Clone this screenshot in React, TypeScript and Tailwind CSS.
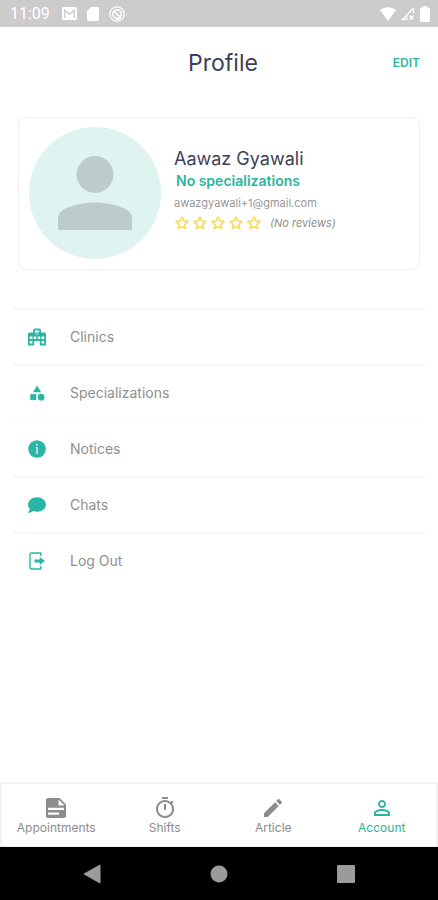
import React from 'react';
import {
  MdCategory,
  MdEdit,
  MdOutlineTimer,
  MdPersonOutline,
} from 'react-icons/md';
import { FaComment } from 'react-icons/fa';

type IconProps = { className?: string };

function WifiIcon({ className }: IconProps) {
  return (
    <svg viewBox="0 0 16 14" className={className} fill="currentColor" aria-hidden="true">
      <path d="M8 14 0 3.2C4.500-.7 11.500-.7 16 3.200Z" />
    </svg>
  );
}

function SignalIcon({ className }: IconProps) {
  return (
    <svg viewBox="0 0 16 16" className={className} fill="none" stroke="currentColor" aria-hidden="true">
      <path d="M13.500 2v5M7 13.500H2.500L13.500 2" strokeWidth="1.200" />
      <path d="M4 13.500 8 9v4.500Z" fill="currentColor" stroke="none" opacity="0.6" />
      <path d="m9.500 9.500 4 4m0-4-4 4" strokeWidth="1.300" />
    </svg>
  );
}

function BatteryIcon({ className }: IconProps) {
  return (
    <svg viewBox="0 0 10 16" className={className} fill="currentColor" aria-hidden="true">
      <path d="M3 0h4v1.500h1.500c.8 0 1.500.6 1.500 1.400v11.600c0 .9-.6 1.500-1.500 1.500h-7C.6 16 0 15.400 0 14.500V2.900c0-.8.7-1.400 1.500-1.400H3Z" />
    </svg>
  );
}

function MailIcon({ className }: IconProps) {
  return (
    <svg viewBox="0 0 15 13" className={className} aria-hidden="true">
      <rect width="15" height="13" rx="1.500" fill="currentColor" />
      <path d="M2.800 11V3.200l4.700 4.100 4.700-4.100V11" fill="none" stroke="#cccccc" strokeWidth="1.400" />
    </svg>
  );
}

function SdCardIcon({ className }: IconProps) {
  return (
    <svg viewBox="0 0 12 14" className={className} fill="currentColor" aria-hidden="true">
      <path d="M4.200 0h6.400C11.400 0 12 .6 12 1.400v11.200c0 .8-.6 1.400-1.400 1.400H1.400C.6 14 0 13.400 0 12.600V4.300Z" />
    </svg>
  );
}

function BlockedIcon({ className }: IconProps) {
  return (
    <svg viewBox="0 0 16 16" className={className} fill="none" stroke="currentColor" aria-hidden="true">
      <circle cx="8" cy="8" r="7.200" strokeWidth="1.300" />
      <circle cx="8" cy="8" r="4.200" strokeWidth="1.500" />
      <path d="m5 5 6 6" strokeWidth="1.600" />
      <path d="M7 13.500 12 12" strokeWidth="1.500" />
    </svg>
  );
}

function StarIcon({ className }: IconProps) {
  return (
    <svg viewBox="0 0 16 16" className={className} fill="none" stroke="currentColor" aria-hidden="true">
      <path
        d="m8 2 1.700 4 4.400.4-3.300 2.900 1 4.300L8 11.300l-3.800 2.300 1-4.300L1.900 6.400 6.300 6Z"
        strokeWidth="1.500"
        strokeLinejoin="round"
      />
    </svg>
  );
}

function ClinicIcon({ className }: IconProps) {
  return (
    <svg viewBox="0 0 18 17" className={className} aria-hidden="true">
      <path d="M5 2Q5 0 7 0h4q2 0 2 2v2h3.500Q18 4 18 5.500V17h-6.200v-4.500H6.200V17H0V5.500Q0 4 1.500 4H5Z" fill="currentColor" />
      <path
        d="M6.800 2h4.400v2H6.800ZM1.800 8h2.600v2.500H1.800ZM5.800 8h2.400v2.500H5.800ZM9.800 8h2.400v2.500H9.800ZM13.600 8h2.600v2.500h-2.600ZM1.800 12.500h2.600V15H1.800ZM13.600 12.500h2.600V15h-2.600Z"
        fill="white"
      />
      <path d="M7.800 5.500h2.400" stroke="white" strokeWidth="0.8" />
    </svg>
  );
}

function NoticeIcon({ className }: IconProps) {
  return (
    <svg viewBox="0 0 18 18" className={className} aria-hidden="true">
      <circle cx="9" cy="9" r="8.800" fill="currentColor" />
      <path d="M9 3.800v2M9 7v6.600" stroke="white" strokeOpacity="0.65" strokeWidth="1.800" />
      <path d="M7.500 7.500H9m-1.500 6h3" stroke="white" strokeOpacity="0.4" strokeWidth="0.800" />
    </svg>
  );
}

function LogOutIcon({ className }: IconProps) {
  return (
    <svg viewBox="0 0 16 18" className={className} fill="none" stroke="currentColor" aria-hidden="true">
      <path d="M11.800 4V1H2.500Q1 1 1 2.500v13Q1 17 2.500 17h9.300v-3" strokeWidth="1.400" />
      <path d="M5.500 7.400h5.200V4.900L16 9l-5.300 4.100v-2.500H5.500Z" fill="currentColor" stroke="none" />
    </svg>
  );
}

function AppointmentIcon({ className }: IconProps) {
  return (
    <svg viewBox="0 0 24 24" className={className} aria-hidden="true">
      <path d="M4 2h11.500L22 8.500V20c0 1.100-.9 2-2 2H4c-1.100 0-2-.9-2-2V4c0-1.100.9-2 2-2Z" fill="currentColor" />
      <path d="M14.500 3.500V9.500H20.500ZM4 11.800h16v2.200H4ZM4 16.500h11v2.200H4Z" fill="white" />
    </svg>
  );
}

const menu = [
  { label: 'Clinics', icon: ClinicIcon, line: 'border-[#f7f7f7]' },
  { label: 'Specializations', icon: MdCategory, line: 'border-[#f7f7f7]' },
  { label: 'Notices', icon: NoticeIcon, line: 'border-[#fdfdfd]' },
  { label: 'Chats', icon: FaComment, line: 'border-[#f7f7f7]' },
  { label: 'Log Out', icon: LogOutIcon, line: 'border-[#f7f7f7]' },
];

const tabs = [
  { label: 'Appointments', icon: AppointmentIcon, active: false },
  { label: 'Shifts', icon: MdOutlineTimer, active: false },
  { label: 'Article', icon: MdEdit, active: false },
  { label: 'Account', icon: MdPersonOutline, active: true },
];

export default function App() {
  return (
    <div className="flex min-h-screen flex-col bg-white font-['Inter','Open_Sans',sans-serif]">
      <div className="flex h-[27px] items-center justify-between bg-[#cccccc] pr-2 pl-[10px] text-white">
        <div className="flex items-center">
          <span className="font-['Roboto',sans-serif] text-base">11:09</span>
          <MailIcon className="ml-3 h-[13px] w-[15px]" />
          <SdCardIcon className="ml-[10px] h-[14px] w-3" />
          <BlockedIcon className="ml-[10px] size-4" />
        </div>
        <div className="flex items-center">
          <WifiIcon className="h-[14px] w-4" />
          <SignalIcon className="ml-1 size-4" />
          <BatteryIcon className="ml-1 h-4 w-[10px]" />
        </div>
      </div>

      <header className="grid h-[72px] grid-cols-[1fr_auto_1fr] items-center px-[18px]">
        <h1 className="col-start-2 ml-2 text-[23px] text-[#3d4158]">Profile</h1>
        <button type="button" className="justify-self-end text-xs font-semibold text-[#2bb5a0]">
          EDIT
        </button>
      </header>

      <main className="flex flex-1 flex-col">
        <section className="mx-[18px] mt-[18px] flex items-center gap-[13px] rounded-lg border border-[#eeeef9] px-[10px] pt-[9px] pb-[10px]">
          <div className="flex size-[132px] shrink-0 items-center justify-center rounded-full bg-[#dff3f1]">
            <svg viewBox="0 0 74 74" className="size-[74px] text-[#bccccb]" fill="currentColor" aria-hidden="true">
              <circle cx="37" cy="18.500" r="18.500" />
              <path d="M0 74V62C0 51 24 46.500 37 46.500S74 51 74 62v12Z" />
            </svg>
          </div>
          <div className="min-w-0 pb-2">
            <h2 className="text-lg leading-6 text-[#3d4158]">Aawaz Gyawali</h2>
            <p className="ml-[2px] text-sm leading-5 font-semibold text-[#2bb5a0]">No specializations</p>
            <p className="text-[11px] leading-6 text-[#979797]">awazgyawali+1@gmail.com</p>
            <div className="flex items-center text-[#fbd942]">
              {[1, 2, 3, 4, 5].map((star) => (
                <StarIcon key={star} className="mr-[2px] size-4" />
              ))}
              <span className="ml-[6px] text-[11px] text-[#8c8c8c] italic">(No reviews)</span>
            </div>
          </div>
        </section>

        <nav className="mx-3 mt-[38px]">
          {menu.map(({ label, icon: Icon, line }) => (
            <a
              key={label}
              href="#"
              className={`flex h-14 items-center border-t-2 pl-4 text-[#8f8f8f] ${line}`}
            >
              <Icon className="size-[18px] text-[#2bb5a5]" />
              <span className="ml-6 text-sm">{label}</span>
            </a>
          ))}
        </nav>
      </main>

      <nav className="grid h-[65px] grid-cols-4 border-2 border-b border-[#f1f1f6]">
        {tabs.map(({ label, icon: Icon, active }) => (
          <a
            key={label}
            href="#"
            className={`flex flex-col items-center pt-3 ${active ? 'text-[#2bb5a0]' : 'text-[#8c8c8c]'}`}
          >
            <Icon className="size-6" />
            <span className="text-xs leading-4">{label}</span>
          </a>
        ))}
      </nav>

      <div className="flex h-[53px] items-center justify-around bg-black px-[29px] text-[#9b9b9b]">
        <button type="button" aria-label="Back">
          <svg viewBox="0 0 18 20" className="h-5 w-[18px]" fill="currentColor">
            <path d="M17 1v18L1 10Z" stroke="currentColor" strokeLinejoin="round" />
          </svg>
        </button>
        <button type="button" aria-label="Home">
          <svg viewBox="0 0 18 18" className="size-[18px]" fill="currentColor">
            <circle cx="9" cy="9" r="8.500" />
          </svg>
        </button>
        <button type="button" aria-label="Recent apps">
          <svg viewBox="0 0 18 18" className="size-[18px]" fill="currentColor">
            <rect width="18" height="18" rx="1" />
          </svg>
        </button>
      </div>
    </div>
  );
}
